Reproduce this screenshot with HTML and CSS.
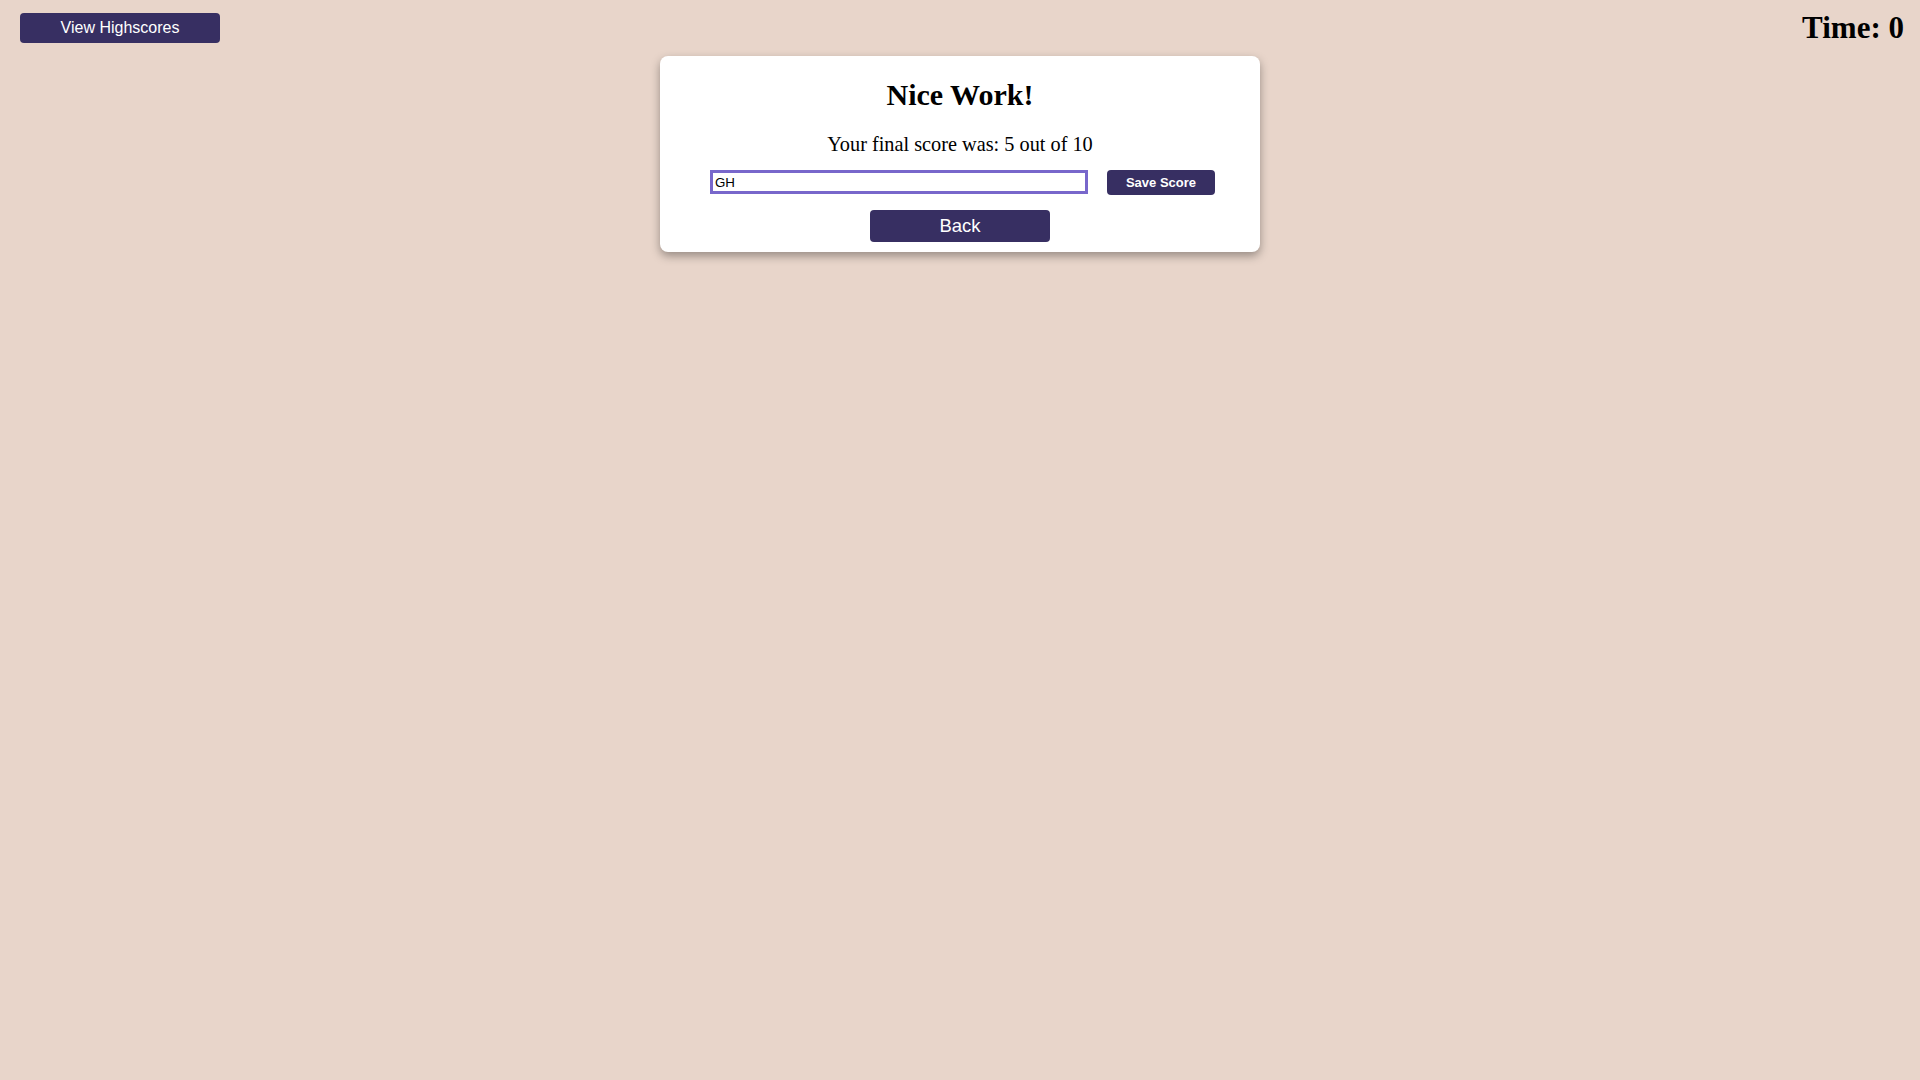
FILE: index.html
```html
<!DOCTYPE html>
<html lang="en">
<head>
<meta charset="utf-8">
<title>Quiz</title>
<link rel="stylesheet" href="styles.css">
</head>
<body>
<header class="topbar">
  <button class="btn btn-scores">View Highscores</button>
  <h2 class="timer">Time: 0</h2>
</header>
<main class="card">
  <h1 class="card-title">Nice Work!</h1>
  <p class="card-score">Your final score was: 5 out of 10</p>
  <div class="save-row">
    <input class="initials" type="text" value="GH">
    <button class="btn btn-save">Save Score</button>
  </div>
  <button class="btn btn-back">Back</button>
</main>
</body>
</html>
```
FILE: styles.css
```css
html, body {
  margin: 0;
  padding: 0;
}
body {
  background: #e8d5ca;
  font-family: "Liberation Serif", "Times New Roman", serif;
  color: #000;
  width: 1920px;
  height: 1080px;
}
.topbar {
  display: flex;
  justify-content: space-between;
  align-items: flex-start;
  padding: 10px 16px 0 20px;
  height: 46px;
}
.btn {
  font-family: "Liberation Sans", Arial, sans-serif;
  background: #372f62;
  color: #fff;
  border: none;
  border-radius: 4px;
  padding: 0;
  cursor: pointer;
}
.btn-scores {
  margin-top: 3px;
  width: 200px;
  height: 30px;
  font-size: 16px;
}
.timer {
  margin: 0;
  font-size: 31px;
  line-height: 36px;
  font-weight: bold;
}
.card {
  box-sizing: border-box;
  width: 600px;
  margin: 0 auto;
  background: #fff;
  border-radius: 8px;
  box-shadow: 0 4px 10px rgba(0, 0, 0, 0.35);
  padding: 22px 0 10px;
  display: flex;
  flex-direction: column;
  align-items: center;
}
.card-title {
  margin: 0;
  font-size: 30px;
  line-height: 34px;
  font-weight: bold;
}
.card-score {
  margin: 20px 0 0;
  font-size: 20.3px;
  line-height: 24px;
}
.save-row {
  margin-top: 14px;
  display: flex;
  align-items: flex-start;
  gap: 19px;
  padding-left: 5px;
}
.initials {
  box-sizing: border-box;
  width: 378px;
  height: 24px;
  border: 3px solid #7867cb;
  outline: none;
  padding: 0 2px;
  font-family: "Liberation Sans", Arial, sans-serif;
  font-size: 13.33px;
  color: #000;
  background: #fff;
}
.btn-save {
  width: 108px;
  height: 25px;
  font-size: 13px;
  font-weight: bold;
}
.btn-back {
  margin-top: 15px;
  width: 180px;
  height: 32px;
  font-size: 18.5px;
}
```
